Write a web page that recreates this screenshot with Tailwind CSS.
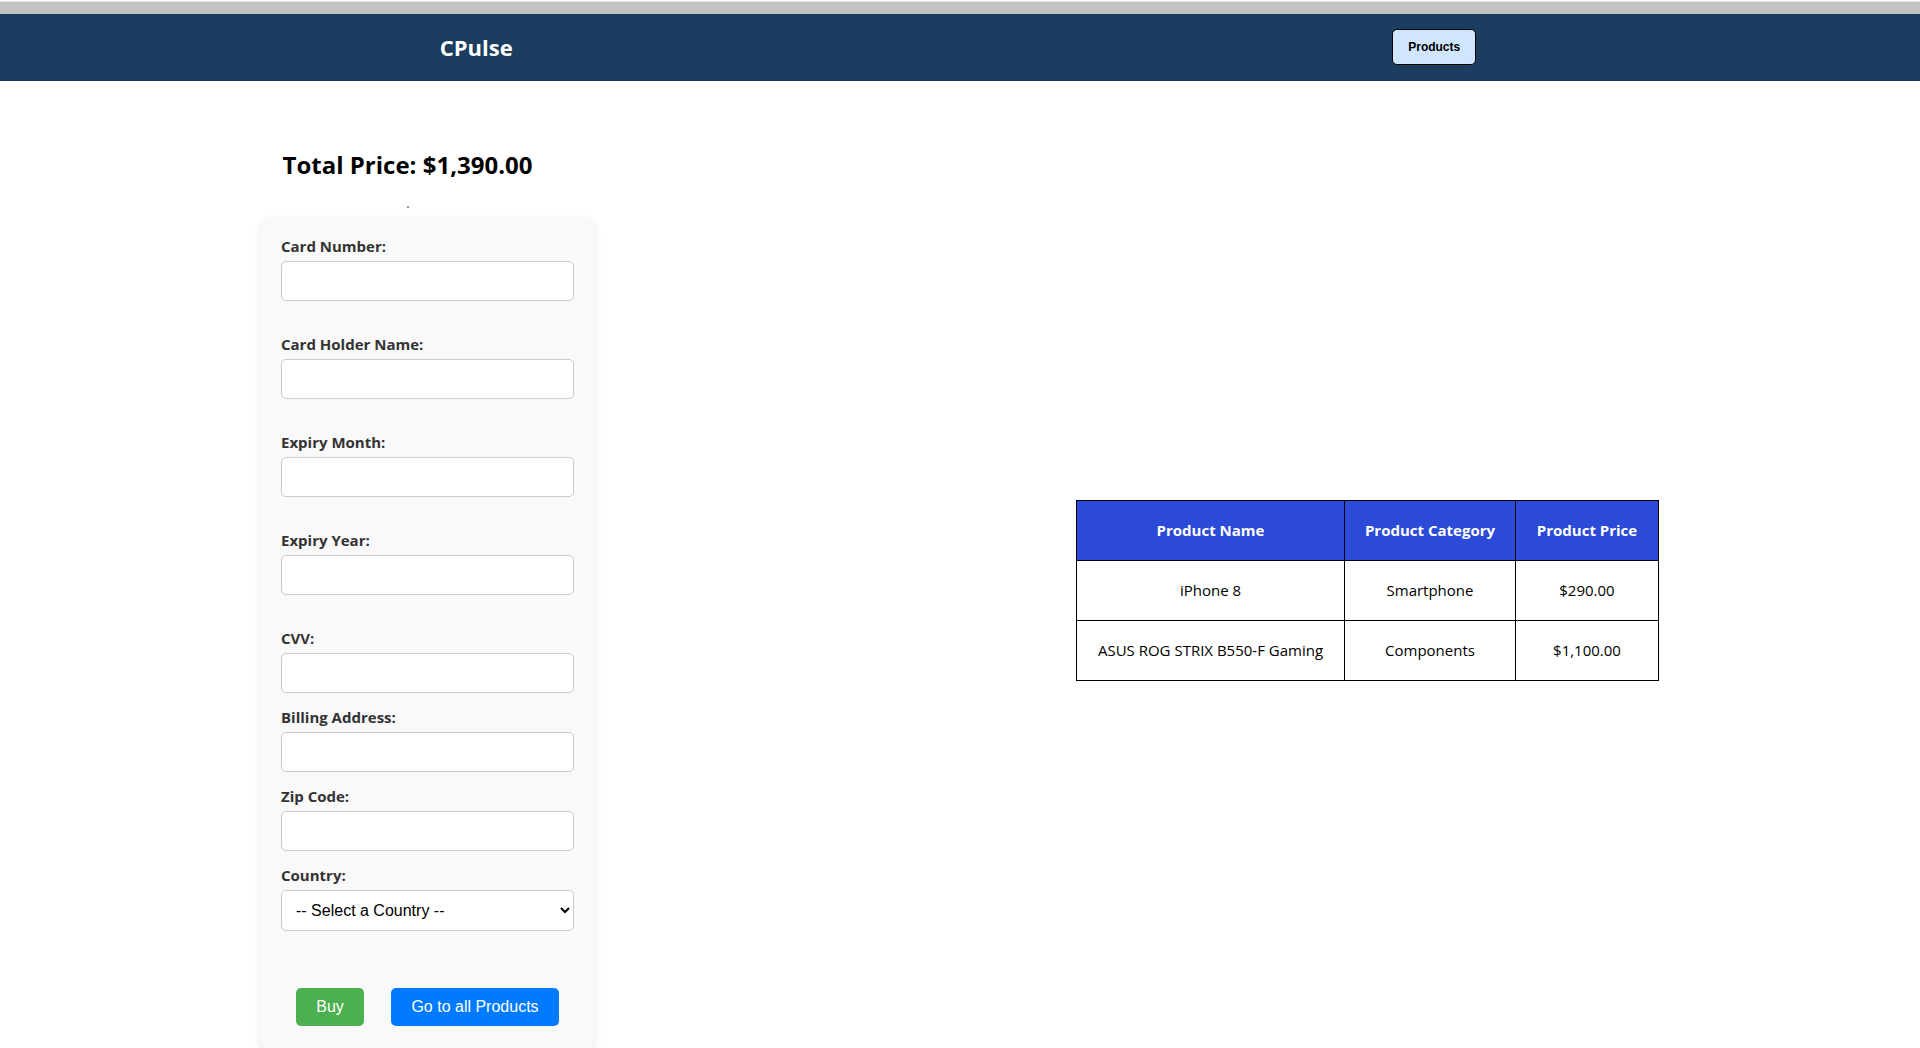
<!DOCTYPE html>
<html lang="en">
<head>
<meta charset="utf-8">
<title>CPulse</title>
<script src="https://cdn.jsdelivr.net/npm/@tailwindcss/browser@4"></script>
</head>
<body class="bg-white font-['Trebuchet_MS','Open_Sans',sans-serif] text-[15px] text-black">
<div class="mt-px h-[13px] border-t border-[#e2e2e2] bg-[#c3c3c3]"></div>
<header class="flex h-[67px] items-center justify-around border-b border-[#16365a] bg-[#1b3d5f]">
  <a href="#" class="text-[22px] font-bold text-white">CPulse</a>
  <button type="button" class="mr-1 h-9 w-[84px] rounded-[5px] border border-black bg-[#d0e6ff] font-['Liberation_Sans',sans-serif] text-xs font-bold">Products</button>
</header>
<main class="flex items-center justify-around px-5 pt-[50px]">
  <section class="w-[333px]">
    <div class="flex flex-col items-center pt-4 pr-10 pb-[9px]">
      <h1 class="text-2xl leading-9 font-bold whitespace-nowrap">Total Price: $1,390.00</h1>
      <hr class="mt-[23px] h-0.5 w-0.5 border-0 bg-[#999999]">
    </div>
    <form class="flex flex-col rounded-[10px] bg-[#f9f9f9] px-5 pt-5 pb-6 shadow-[0_4px_8px_rgba(0,0,0,0.1)]">
      <label for="number" class="mb-[5px] leading-[19px] font-bold text-[#333333]">Card Number:</label>
      <input id="number" type="text" class="mb-[34px] h-10 rounded-[5px] border border-[#cccccc] bg-white px-2.5">
      <label for="holder" class="mb-[5px] leading-[19px] font-bold text-[#333333]">Card Holder Name:</label>
      <input id="holder" type="text" class="mb-[34px] h-10 rounded-[5px] border border-[#cccccc] bg-white px-2.5">
      <label for="month" class="mb-[5px] leading-[19px] font-bold text-[#333333]">Expiry Month:</label>
      <input id="month" type="text" class="mb-[34px] h-10 rounded-[5px] border border-[#cccccc] bg-white px-2.5">
      <label for="year" class="mb-[5px] leading-[19px] font-bold text-[#333333]">Expiry Year:</label>
      <input id="year" type="text" class="mb-[34px] h-10 rounded-[5px] border border-[#cccccc] bg-white px-2.5">
      <label for="cvv" class="mb-[5px] leading-[19px] font-bold text-[#333333]">CVV:</label>
      <input id="cvv" type="text" class="mb-[15px] h-10 rounded-[5px] border border-[#cccccc] bg-white px-2.5">
      <label for="address" class="mb-[5px] leading-[19px] font-bold text-[#333333]">Billing Address:</label>
      <input id="address" type="text" class="mb-[15px] h-10 rounded-[5px] border border-[#cccccc] bg-white px-2.5">
      <label for="zip" class="mb-[5px] leading-[19px] font-bold text-[#333333]">Zip Code:</label>
      <input id="zip" type="text" class="mb-[15px] h-10 rounded-[5px] border border-[#cccccc] bg-white px-2.5">
      <label for="country" class="mb-[5px] leading-[19px] font-bold text-[#333333]">Country:</label>
      <select id="country" class="h-[41px] rounded-[5px] border border-[#cccccc] bg-white pl-2.5 font-['Liberation_Sans',sans-serif] text-base">
        <option>-- Select a Country --</option>
      </select>
      <div class="mt-[57px] flex justify-center gap-[27px] font-['Liberation_Sans',sans-serif] text-base text-white">
        <button type="submit" class="h-[38px] w-[68px] rounded-[5px] bg-[#4caf50]">Buy</button>
        <button type="button" class="h-[38px] w-[168px] rounded-[5px] bg-[#007bff]">Go to all Products</button>
      </div>
    </form>
  </section>
  <table class="w-[583px] table-fixed border-collapse text-center">
    <thead class="bg-[#2a4ad7] text-white">
      <tr class="h-[60px]">
        <th class="w-[268px] border border-black">Product Name</th>
        <th class="w-[171px] border border-black">Product Category</th>
        <th class="border border-black">Product Price</th>
      </tr>
    </thead>
    <tbody>
      <tr class="h-[60px]">
        <td class="border border-black">iPhone 8</td>
        <td class="border border-black">Smartphone</td>
        <td class="border border-black">$290.00</td>
      </tr>
      <tr class="h-[60px]">
        <td class="border border-black">ASUS ROG STRIX B550-F Gaming</td>
        <td class="border border-black">Components</td>
        <td class="border border-black">$1,100.00</td>
      </tr>
    </tbody>
  </table>
</main>
</body>
</html>
